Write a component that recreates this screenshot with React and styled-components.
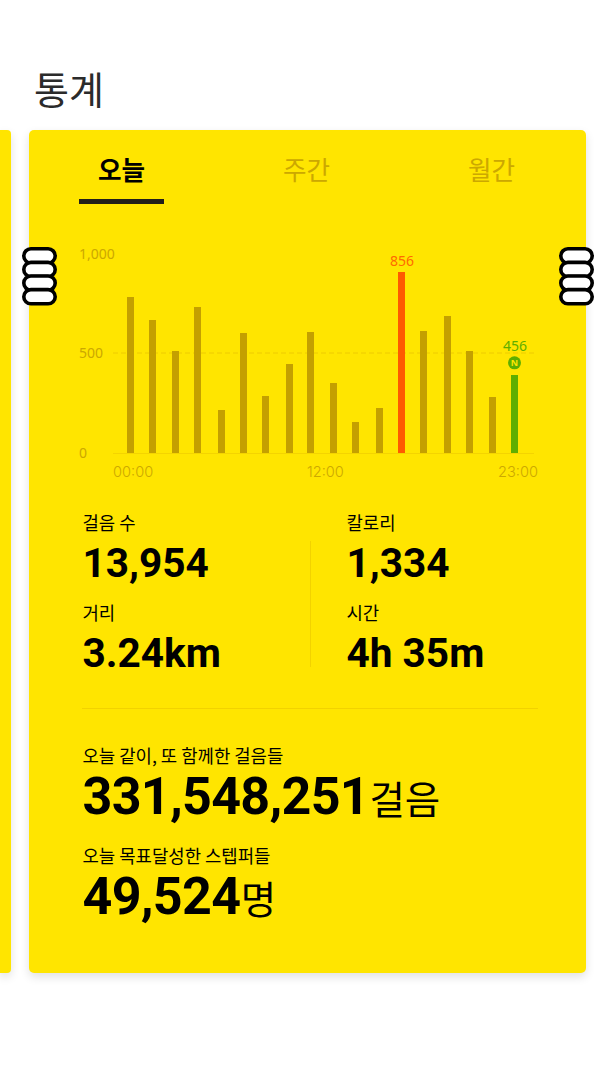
import React from "react";
import styled, { createGlobalStyle } from "styled-components";

const KR = `"Noto Sans CJK KR", "Noto Sans", sans-serif`;
const NUM = `Roboto, "Noto Sans CJK KR", sans-serif`;

const GlobalStyle = createGlobalStyle`
  html, body {
    margin: 0;
    padding: 0;
    background: #fff;
  }
`;

// x, top of each hourly bar
const bars = [
  [127, 297], [149, 320], [172, 351], [194, 307], [218, 410], [240, 333],
  [262, 396], [286, 364], [307, 332], [330, 383], [352, 422], [376, 408],
  [398, 272, "#ff5a00"], [420, 331], [444, 316], [466, 351], [489, 397], [511, 375, "#5fae00"],
];

function Chart() {
  return (
    <ChartSvg width="480" height="250" viewBox="70 240 480 250">
      <line x1="113" y1="353" x2="534" y2="353" stroke="#eecb00" strokeWidth="1" strokeDasharray="5 3" />
      <line x1="113" y1="453.5" x2="534" y2="453.5" stroke="#f4d400" strokeWidth="1" />
      {bars.map(([x, top, color]) => (
        <rect key={x} x={x} y={top} width="7" height={453 - top} fill={color || "#c4a000"} />
      ))}
      <AxisText x="79" y="259">1,000</AxisText>
      <AxisText x="79" y="358">500</AxisText>
      <AxisText x="79" y="458">0</AxisText>
      <TimeText x="113" y="477">00:00</TimeText>
      <TimeText x="307" y="477">12:00</TimeText>
      <TimeText x="498" y="477">23:00</TimeText>
      <AxisText x="390" y="266" fill="#ff6a00">856</AxisText>
      <AxisText x="503" y="351" fill="#5fae00">456</AxisText>
      <circle cx="514.5" cy="362.8" r="6.5" fill="#5fae00" />
      <BadgeText x="514.5" y="366" textAnchor="middle">N</BadgeText>
    </ChartSvg>
  );
}

function Coil({ side }) {
  return (
    <CoilSvg $side={side} width="35" height="59" viewBox="0 0 35 59">
      {[0, 1, 2, 3].map((i) => (
        <rect key={i} x="1.8" y={1.8 + i * 13.6} width="31.4" height="14.2" rx="7.1" fill="#fff" stroke="#000" strokeWidth="3.6" />
      ))}
    </CoilSvg>
  );
}

export default function App() {
  return (
    <Page>
      <GlobalStyle />
      <Title>통계</Title>
      <Track>
        <PrevCard />
        <Card>
          <Coil side="left" />
          <Coil side="right" />
          <Tabs>
            <Tab $active>오늘</Tab>
            <Tab>주간</Tab>
            <Tab>월간</Tab>
          </Tabs>
          <Chart />
          <Stats>
            <StatCol>
              <Label>걸음 수</Label>
              <Value>13,954</Value>
              <Label>거리</Label>
              <Value>3.24km</Value>
            </StatCol>
            <Divider />
            <StatCol $right>
              <Label>칼로리</Label>
              <Value>1,334</Value>
              <Label>시간</Label>
              <Value>4h 35m</Value>
            </StatCol>
          </Stats>
          <Rule />
          <Community>
            <Label>오늘 같이, 또 함께한 걸음들</Label>
            <BigRow>
              <BigValue>331,548,251</BigValue>
              <Unit>걸음</Unit>
            </BigRow>
            <Label $gap>오늘 목표달성한 스텝퍼들</Label>
            <BigRow>
              <BigValue>49,524</BigValue>
              <Unit>명</Unit>
            </BigRow>
          </Community>
        </Card>
      </Track>
    </Page>
  );
}

const Page = styled.div`
  width: 608px;
  height: 1080px;
  overflow: hidden;
  background: #fff;
`;

const Title = styled.h1`
  margin: 0;
  padding: 61px 0 0 34px;
  height: 69px;
  font: 400 38px/54px ${KR};
  color: #2b2b2b;
`;

const Track = styled.div`
  display: flex;
  gap: 18px;
  align-items: stretch;
`;

const PrevCard = styled.div`
  flex: 0 0 11px;
  height: 843px;
  background: #ffe500;
  border-radius: 0 4px 4px 0;
  box-shadow: 0 4px 10px rgba(0, 0, 0, 0.12);
`;

const Card = styled.section`
  position: relative;
  flex: 0 0 557px;
  height: 843px;
  background: #ffe500;
  border-radius: 5px;
  box-shadow: 0 4px 10px rgba(0, 0, 0, 0.12);
`;

const CoilSvg = styled.svg`
  position: absolute;
  top: 117px;
  ${(p) => (p.$side === "left" ? "left: -7px;" : "right: -8px;")}
`;

const Tabs = styled.div`
  display: flex;
  justify-content: space-between;
  padding: 0 52px 0 50px;
`;

const Tab = styled.div`
  box-sizing: border-box;
  width: 85px;
  height: 74px;
  padding-top: 21px;
  text-align: center;
  font: ${(p) => (p.$active ? 700 : 400)} 25.6px/36px ${KR};
  color: ${(p) => (p.$active ? "#000" : "#cca800")};
  border-bottom: 5px solid ${(p) => (p.$active ? "#221f1a" : "transparent")};
`;

const ChartSvg = styled.svg`
  display: block;
  margin: 36px 0 0 41px;
`;

const AxisText = styled.text.attrs((p) => ({ fill: p.fill || "#cca800" }))`
  font: 400 14px "Noto Sans", sans-serif;
`;

const TimeText = styled.text.attrs({ fill: "#cca800" })`
  font: 300 14.6px Inter, sans-serif;
`;

const BadgeText = styled.text.attrs({ fill: "#ffe500" })`
  font: 700 9px "Noto Sans", sans-serif;
`;

const Stats = styled.div`
  display: flex;
  margin: 20px 0 0 54px;
`;

const StatCol = styled.div`
  width: ${(p) => (p.$right ? "auto" : "227px")};
  padding-left: ${(p) => (p.$right ? "36px" : "0")};
`;

const Divider = styled.div`
  flex: 0 0 1px;
  height: 126px;
  margin-top: 31px;
  background: #f2d200;
`;

const Label = styled.div`
  height: 26px;
  margin-top: ${(p) => (p.$gap ? "19px" : "0")};
  margin-left: -0.5px;
  font: 400 17.8px/24px ${KR};
  color: #000;
`;

const Value = styled.div`
  height: 54px;
  margin-bottom: 10px;
  margin-left: -0.5px;
  font: 700 40.6px/54px ${NUM};
  color: #000;
`;

const Rule = styled.div`
  height: 1px;
  margin: 18px 48px 0 53px;
  background: #f2d200;
`;

const Community = styled.div`
  margin: 34px 0 0 54px;
`;

const BigRow = styled.div`
  display: flex;
  align-items: baseline;
  height: 54px;
  padding-top: 1px;
  color: #000;
`;

const BigValue = styled.span`
  margin-left: -0.5px;
  letter-spacing: -0.7px;
  font: 700 52px/54px ${NUM};
`;

const Unit = styled.span`
  margin-left: 0.5px;
  font: 400 38.5px/54px ${KR};
`;
